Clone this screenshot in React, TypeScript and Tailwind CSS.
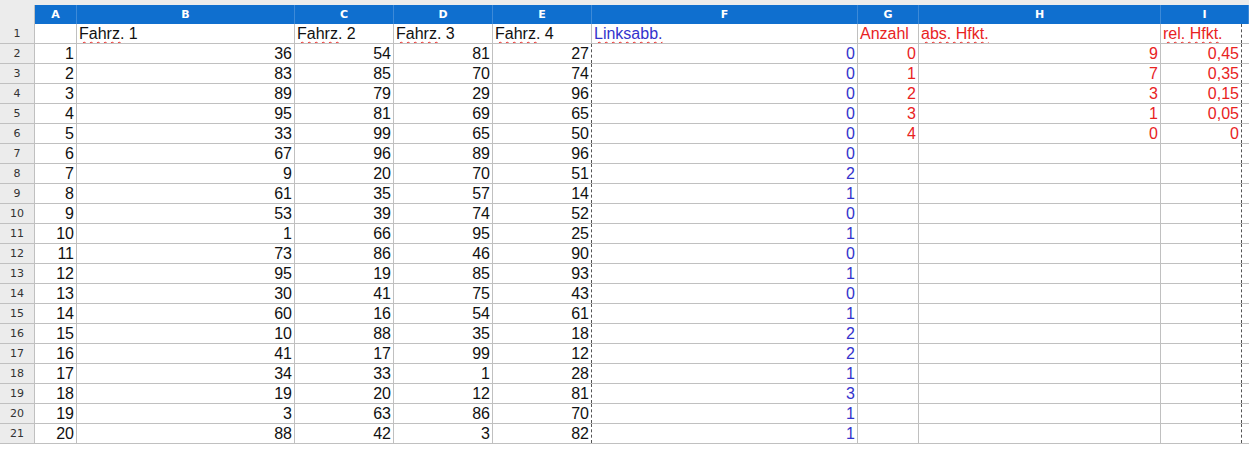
const A=[36,83,89,95,33,67,9,61,53,1,73,95,30,60,10,41,34,19,3,88];
const C=[54,85,79,81,99,96,20,35,39,66,86,19,41,16,88,17,33,20,63,42];
const D=[81,70,29,69,65,89,70,57,74,95,46,85,75,54,35,99,1,12,86,3];
const E=[27,74,96,65,50,96,51,14,52,25,90,93,43,61,18,12,28,81,70,82];
const F=[0,0,0,0,0,0,2,1,0,1,0,1,0,1,2,2,1,3,1,1];
const G=["0","1","2","3","4"],H=["9","7","3","1","0"],I=["0,45","0,35","0,15","0,05","0"];
const cols=[{l:"A",w:42},{l:"B",w:218},{l:"C",w:99},{l:"D",w:99},{l:"E",w:99},{l:"F",w:266},{l:"G",w:61},{l:"H",w:242},{l:"I",w:88}];
const blue="text-[#3333cc]",red="text-[#e8231f]";
const sq="underline decoration-wavy decoration-[#e8231f] decoration-1 underline-offset-2";
function Cell({w,children,cls="",right=true,dashed=false}:{w:number;children?:any;cls?:string;right?:boolean;dashed?:boolean}){
  return <div style={{width:w}} className={`h-full shrink-0 border-r ${dashed?"border-dashed border-r-[#555]":"border-[#c0c0c0]"} px-[2px] leading-[19px] whitespace-nowrap overflow-hidden ${right?"text-right":"text-left"} ${cls}`}>{children}</div>;
}
export default function App(){
  return <div className="w-[1249px] h-[449px] bg-white overflow-hidden text-[16px] text-[#111]" style={{fontFamily:'"Liberation Sans",Arial,sans-serif'}}>
    <div className="h-[5px] bg-[#ececec]"/>
    <div className="flex h-[19px] text-[11px] font-bold text-white leading-[19px]" style={{fontFamily:'"DejaVu Sans",sans-serif'}}>
      <div className="w-[35px] bg-[#ececec] border-r border-[#c0c0c0]"/>
      {cols.map(c=><div key={c.l} style={{width:c.w}} className="bg-[#0f6fcf] text-center border-r border-[#3d8ad8] shrink-0">{c.l}</div>)}
    </div>
    {Array.from({length:21}).map((_,r)=>{
      const i=r-1;
      return <div key={r} className="flex h-[20px] border-b border-[#c0c0c0]">
        <div className="w-[35px] shrink-0 bg-[#ececec] border-r border-[#c0c0c0] text-center text-[11px] leading-[19px] text-[#333]" style={{fontFamily:'"DejaVu Sans",sans-serif'}}>{r+1}</div>
        {r===0?<>
          <Cell w={42}/>
          <Cell w={218} right={false}><span className={sq}>Fahrz.</span> 1</Cell>
          <Cell w={99} right={false}><span className={sq}>Fahrz.</span> 2</Cell>
          <Cell w={99} right={false}><span className={sq}>Fahrz.</span> 3</Cell>
          <Cell w={99} right={false}><span className={sq}>Fahrz.</span> 4</Cell>
          <Cell w={266} right={false} cls={blue}><span className={sq}>Linksabb.</span></Cell>
          <Cell w={61} right={false} cls={red}>Anzahl</Cell>
          <Cell w={242} right={false} cls={red}><span className={sq}>abs. Hfkt.</span></Cell>
          <Cell w={81} right={false} cls={red} dashed><span className={sq}>rel. Hfkt.</span></Cell>
        </>:<>
          <Cell w={42}>{r}</Cell>
          <Cell w={218}>{A[i]}</Cell>
          <Cell w={99}>{C[i]}</Cell>
          <Cell w={99}>{D[i]}</Cell>
          <Cell w={99} dashed>{E[i]}</Cell>
          <Cell w={266} cls={blue}>{F[i]}</Cell>
          <Cell w={61} cls={red}>{G[i]}</Cell>
          <Cell w={242} cls={red}>{H[i]}</Cell>
          <Cell w={81} cls={red} dashed>{I[i]}</Cell>
        </>}
      </div>;
    })}
  </div>;
}
